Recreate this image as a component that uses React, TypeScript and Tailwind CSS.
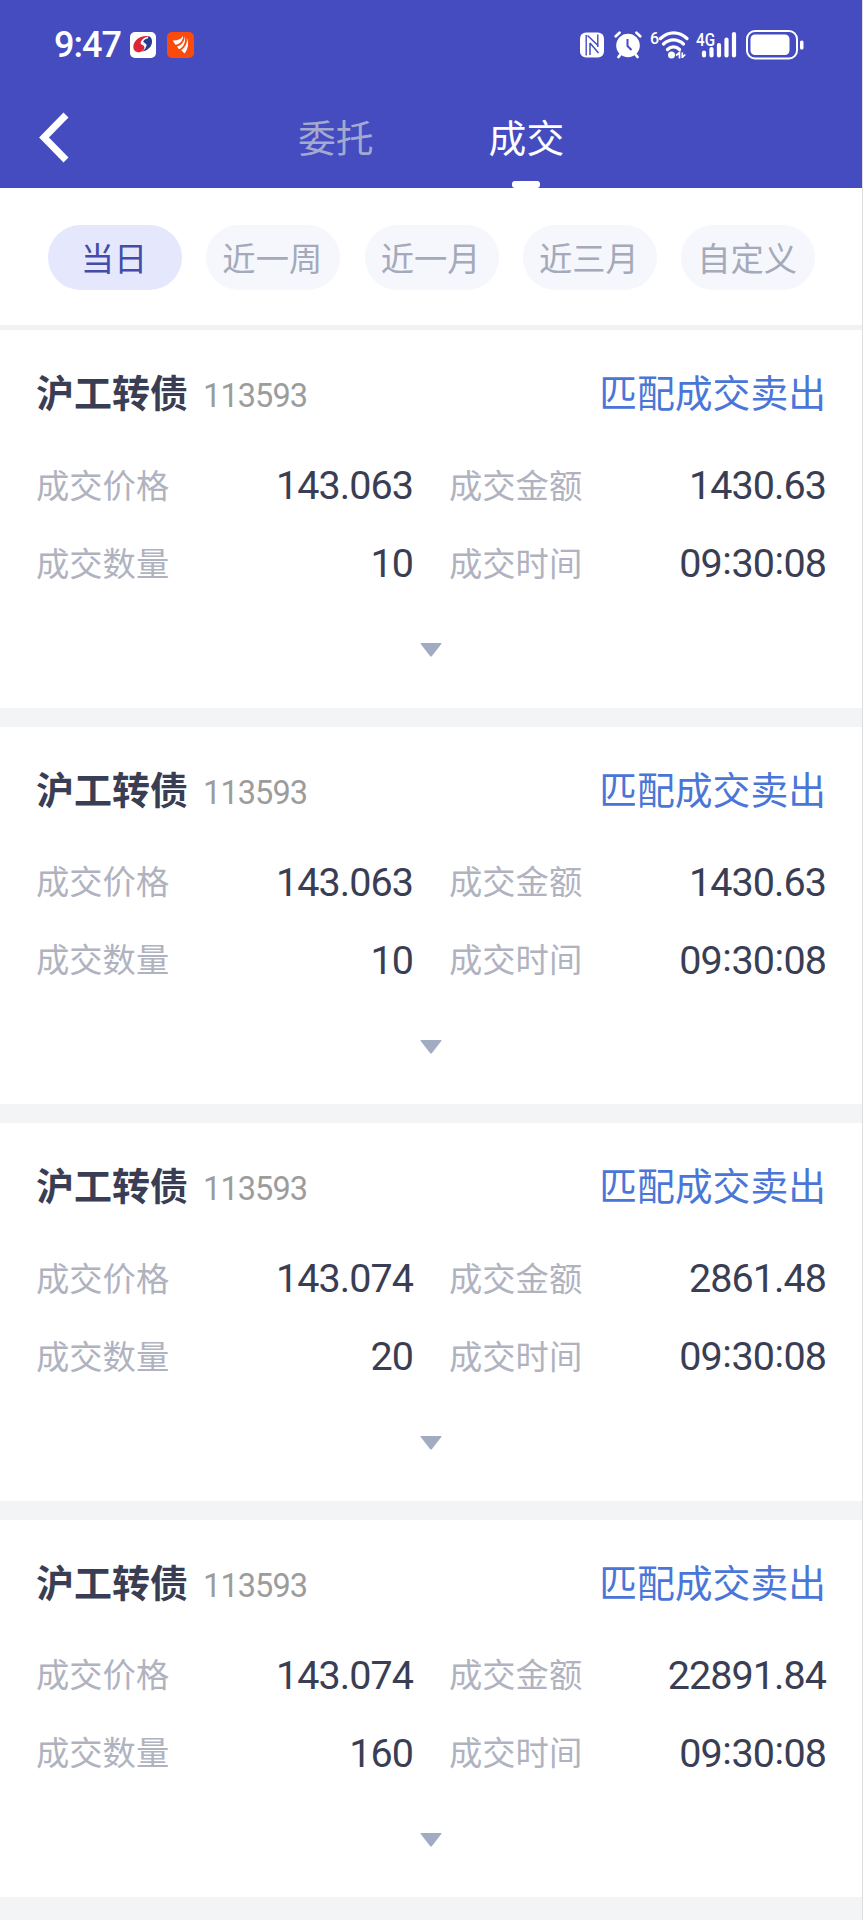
import React, { useState } from "react";

type Trade = {
  name: string;
  code: string;
  price: string;
  amount: string;
  count: string;
  time: string;
};

const trades: Trade[] = [
  { name: "沪工转债", code: "113593", price: "143.063", amount: "1430.63", count: "10", time: "09:30:08" },
  { name: "沪工转债", code: "113593", price: "143.063", amount: "1430.63", count: "10", time: "09:30:08" },
  { name: "沪工转债", code: "113593", price: "143.074", amount: "2861.48", count: "20", time: "09:30:08" },
  { name: "沪工转债", code: "113593", price: "143.074", amount: "22891.84", count: "160", time: "09:30:08" },
];

const ranges = ["当日", "近一周", "近一月", "近三月", "自定义"];

function StatusBar() {
  return (
    <div className="flex h-[90px] items-center pl-[54px] pr-[57px] text-white">
      <span className="w-[67px] whitespace-nowrap font-[Roboto] text-[36px] leading-none font-medium tracking-[-1px]">
        9:47
      </span>
      {/* app badges */}
      <svg className="ml-[9px]" width="26" height="26" viewBox="0 0 26 26">
        <rect width="26" height="26" rx="5" fill="#fff" />
        <path d="M19 4.200C11 2.800 3.600 8 3.300 14.500 3.200 20 9 22 13 18.500c2.500-2.300 1.600-4.800-1.400-6C9 11 12 6 19 4.200z" fill="#dc2637" />
        <path d="M19 4.200c4 1.800 4 8 .5 11.600-2.200 2.300-5 3.600-7.800 3.800 3.600-1.800 5.100-4.600 3.800-6.600-1.200-1.600-3-1.300-2.600-3.400C13.400 7 16 5 19 4.200z" fill="#263c8f" />
        <path d="M18 5.500c-4 1-5.800 3-5.300 4.500.5 1.500 3.600 1.300 3.400 4.200" fill="none" stroke="#fff" strokeWidth="1.300" />
      </svg>
      <svg className="ml-[11px]" width="27" height="26" viewBox="0 0 27 26">
        <rect width="27" height="26" rx="5" fill="#fa4b0c" />
        <path d="M5.500 8.500C9 9 13.500 8 16 4c.5 4-3 8.500-7.500 8.800z" fill="#fff" />
        <path d="M17.300 4c1 4.500-2.500 9.500-7.300 10.500l2 2.800C16.500 15.500 19.500 9.500 17.300 4z" fill="#fff" />
        <path d="M19.300 5c1.800 4.500-.3 9.500-5 13.200l3.200 3.300c3.800-4.500 4.800-11.500 1.800-16.500z" fill="#fff" />
      </svg>
      <div className="flex-1" />
      {/* nfc */}
      <svg width="26" height="26" viewBox="0 0 26 26">
        <rect x="1" y="0.500" width="24" height="25" rx="6" fill="#fff" />
        <path d="M7.200 3v20.500M18.800 2.500V15" stroke="#444cbf" strokeWidth="1.400" />
        <path d="M8.500 3.500l10.500 10M11 11v12M11 11l8.500 10" fill="none" stroke="#444cbf" strokeWidth="1.500" />
      </svg>
      {/* alarm */}
      <svg className="ml-[9px]" width="28" height="28" viewBox="0 0 28 28">
        <circle cx="14" cy="14.500" r="11.800" fill="#fff" />
        <path d="M1.800 5.200L5.500 1.800M26.200 5.200L22.500 1.800M4.500 26l3-4M23.500 26l-3-4" stroke="#fff" strokeWidth="2.800" strokeLinecap="round" />
        <path d="M13.500 8v7l4 4" fill="none" stroke="#444cbf" strokeWidth="2" />
      </svg>
      {/* wifi */}
      <svg className="ml-[8px]" width="40" height="30" viewBox="0 0 40 30">
        <text x="0" y="13.500" fill="#fff" fontFamily="Roboto" fontSize="16" fontWeight="500">6</text>
        <path d="M10.500 8.500c8-7.500 18.500-7.500 26.500 0M13.500 14c6-5.500 14-5.500 20 0M17.500 19.500c3.500-3.500 8.500-3.500 12 0" fill="none" stroke="#fff" strokeWidth="3.300" strokeLinecap="round" />
        <circle cx="21.500" cy="25" r="3.500" fill="#fff" />
        <path d="M26 25.500l3.500-3v6M32.300 28v-5.500M32.300 27.500l3-3" fill="none" stroke="#fff" strokeWidth="1.700" />
      </svg>
      {/* mobile signal */}
      <svg className="ml-[6px]" width="41" height="30" viewBox="0 0 41 30">
        <text x="0" y="15.500" fill="#fff" fontFamily="Roboto" fontSize="18" fontWeight="500" textLength="19" lengthAdjust="spacingAndGlyphs">4G</text>
        <path d="M8 22.500v3M15.500 19v6.500M23 15v10.500M30.500 9.500v16M38 4v21.500" stroke="#fff" strokeWidth="4.200" strokeLinecap="round" />
      </svg>
      {/* battery */}
      <svg className="ml-[8px]" width="60" height="32" viewBox="0 0 60 32">
        <rect x="2" y="2" width="50" height="27.500" rx="8" fill="none" stroke="#fff" strokeWidth="2" />
        <rect x="5.500" y="5.500" width="39" height="20.500" rx="4.500" fill="#fff" />
        <rect x="55" y="11.500" width="3.500" height="9" rx="1.500" fill="#fff" />
      </svg>
    </div>
  );
}

function Field({ label, value }: { label: string; value: string }) {
  return (
    <div className="flex h-[78px] items-center justify-between">
      <span className="pb-[5px] text-[33.300px] text-[#b0b3bf]">{label}</span>
      <span className="font-[Roboto] text-[39.500px] tracking-[-0.950px] text-[#3a3e54]">
        {/* the colon sits a little higher than the baseline */}
        {value.split("").map((ch, i) =>
          ch === ":" ? (
            <span key={i} className="inline-block -translate-y-[3px] px-[0.500px]">
              :
            </span>
          ) : (
            ch
          )
        )}
      </span>
    </div>
  );
}

function TradeCard({ trade }: { trade: Trade }) {
  return (
    <div className="h-[396.500px] border-b-[19px] border-[#f2f4f6] bg-white px-[36px] pt-[34px]">
      <div className="flex h-[56px] items-center justify-between">
        <div className="flex items-baseline">
          <span className="text-[38px] leading-[56px] font-bold text-[#3a3e54]">{trade.name}</span>
          <span className="ml-[15px] font-[Roboto] text-[32.500px] tracking-[-0.900px] text-[#9c9c9c]">
            {trade.code}
          </span>
        </div>
        <a className="text-[37.800px] leading-[54px] pb-[2px] text-[#4a76d8]">匹配成交卖出</a>
      </div>
      <div className="mt-[27px] grid grid-cols-2 gap-x-[36px]">
        <Field label="成交价格" value={trade.price} />
        <Field label="成交金额" value={trade.amount} />
        <Field label="成交数量" value={trade.count} />
        <Field label="成交时间" value={trade.time} />
      </div>
      <svg className="mx-auto mt-[40px]" width="22" height="14" viewBox="0 0 22 14">
        <path d="M1 0h20q1 0 .3 1L12 13q-1 1-2 0L.7 1Q0 0 1 0z" fill="#a1acc2" />
      </svg>
    </div>
  );
}

export default function App() {
  const [range, setRange] = useState("当日");

  return (
    <div className="h-[1920px] w-[863px] overflow-hidden border-r border-[#dedede] bg-white font-['Noto_Sans_CJK_SC',sans-serif]">
      <header className="h-[188px] bg-[#444cbf]">
        <StatusBar />
        <nav className="flex h-[98px] pl-[39px] text-[37.800px] leading-[92px]">
          <svg className="mt-[22px]" width="32" height="52" viewBox="0 0 32 52">
            <path d="M27 3L5 25.500 27 48" fill="none" stroke="#fff" strokeWidth="7" />
          </svg>
          <span className="ml-[227px] text-[#a3a9cf]">委托</span>
          <div className="ml-[115px] flex flex-col items-center text-white">
            <span className="h-[91px]">成交</span>
            <span className="h-[7px] w-[28px] rounded-[3px] bg-white" />
          </div>
        </nav>
      </header>

      {/* date range */}
      <div className="flex h-[142px] gap-[24.300px] border-b-[5px] border-[#f2f2f2] pt-[37px] pl-[48px]">
        {ranges.map((r) => (
          <button
            key={r}
            onClick={() => setRange(r)}
            className={`h-[65px] w-[134px] rounded-full pr-[2px] pb-[2px] text-[33.300px] leading-[63px] ${
              r === range ? "bg-[#e5e8fd] text-[#444ba8]" : "bg-[#f6f7fc] text-[#a4aaba]"
            }`}
          >
            {r}
          </button>
        ))}
      </div>

      {trades.map((t, i) => (
        <TradeCard key={i} trade={t} />
      ))}
      <div className="h-6 bg-[#f2f4f6]" />
    </div>
  );
}
